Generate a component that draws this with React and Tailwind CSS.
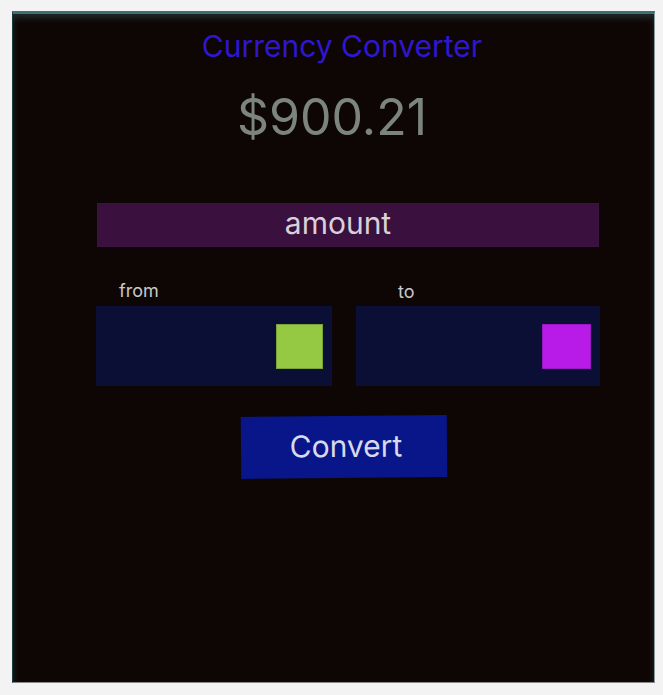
import React from 'react';

const App = () => {
  return (
    <div className="min-h-[695px] w-[663px] bg-[#f3f3f3] pt-[11px] pl-[12px]" style={{ fontFamily: 'Inter, "Noto Sans", sans-serif' }}>
      <div className="w-[643px] h-[672px] bg-[#0e0604] border-t-[3px] border-t-[#3f6e74] border-l border-l-[#1a3a3e] border-r border-r-[#8a9a9a] border-b border-b-[#888] shadow-[inset_0_4px_6px_rgba(70,110,116,0.35)] flex flex-col">
        {/* Title */}
        <h1 className="text-center text-[30px] leading-none text-[#2f17d0] mt-[17px] ml-[17px]">
          Currency Converter
        </h1>

        {/* Result */}
        <div className="text-center text-[50px] leading-none text-[#7c857b] mt-[31px] -ml-[3px]">
          $900.21
        </div>

        {/* Amount */}
        <div className="ml-[84px] mt-[61px] w-[502px] h-[44px] bg-[#3a103e] border border-[#3d1242] flex items-center justify-center pr-[20px] pb-[4px]">
          <span className="text-[30px] text-[#d9d1d9] leading-none">amount</span>
        </div>

        {/* From / To */}
        <div className="flex mt-[35px] ml-[83px] gap-[24px]">
          <div className="flex flex-col">
            <span className="text-[18px] leading-none text-[#c9c9c9] ml-[23px] h-[24px]">from</span>
            <div className="w-[236px] h-[80px] bg-[#0b0e35] flex items-center justify-end pr-[9px]">
              <div className="w-[47px] h-[45px] bg-[#95c843] border border-[#7aa436]" />
            </div>
          </div>
          <div className="flex flex-col">
            <span className="text-[18px] leading-none text-[#c9c9c9] ml-[42px] mt-[1px] h-[23px]">to</span>
            <div className="w-[244px] h-[80px] bg-[#0b0e35] flex items-center justify-end pr-[9px]">
              <div className="w-[49px] h-[45px] bg-[#b81ae8] border border-[#9a18c4]" />
            </div>
          </div>
        </div>

        {/* Convert */}
        <button className="ml-[228px] mt-[30px] w-[206px] h-[62px] bg-[#08168a] -rotate-[0.5deg] flex items-center justify-center pl-[4px] pb-[2px]">
          <span className="text-[30px] leading-none text-[#d8d9ea]">Convert</span>
        </button>
      </div>
    </div>
  );
};

export default App;
